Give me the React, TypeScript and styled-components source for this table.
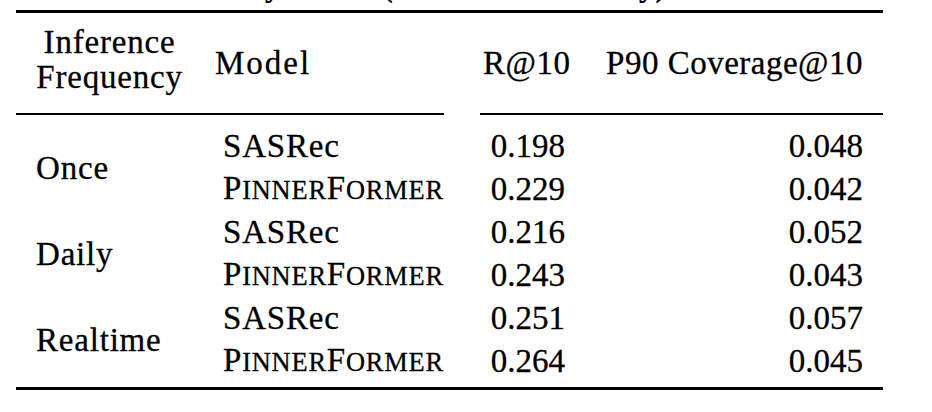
import React from 'react';
import styled, { createGlobalStyle } from 'styled-components';

type Model = 'sasrec' | 'pinnerformer';

type ResultRow = {
  model: Model;
  recall: string;
  coverage: string;
};

type Group = {
  frequency: string;
  rows: ResultRow[];
};

const groups: Group[] = [
  {
    frequency: 'Once',
    rows: [
      { model: 'sasrec', recall: '0.198', coverage: '0.048' },
      { model: 'pinnerformer', recall: '0.229', coverage: '0.042' },
    ],
  },
  {
    frequency: 'Daily',
    rows: [
      { model: 'sasrec', recall: '0.216', coverage: '0.052' },
      { model: 'pinnerformer', recall: '0.243', coverage: '0.043' },
    ],
  },
  {
    frequency: 'Realtime',
    rows: [
      { model: 'sasrec', recall: '0.251', coverage: '0.057' },
      { model: 'pinnerformer', recall: '0.264', coverage: '0.045' },
    ],
  },
];

const Ink = '#000';
const FIRST_BODY_ROW = 4;

const GlobalStyle = createGlobalStyle`
  html, body {
    margin: 0;
    padding: 0;
    background: #fff;
  }
  body {
    font-family: "Liberation Serif", "Times New Roman", serif;
    color: ${Ink};
  }
`;

const Page = styled.div`
  width: 932px;
  height: 412px;
  overflow: hidden;
  background: #fff;
`;

// only the descenders of the caption above the table are in view
const Caption = styled.div`
  margin-top: -31px;
  padding-left: 46px;
  height: 33px;
  font-size: 33px;
  line-height: 33px;
  font-weight: 700;
  white-space: nowrap;
`;

const Table = styled.div`
  display: grid;
  grid-template-columns: 147px 220px 82px 258px;
  grid-template-rows: 100px 2px 10px repeat(6, 43px);
  column-gap: 40px;
  box-sizing: border-box;
  width: 867px;
  margin: 8px 0 0 16px;
  padding: 0 20px 4px;
  border-top: 3px solid ${Ink};
  border-bottom: 3px solid ${Ink};
  font-size: 33px;
  -webkit-text-stroke: 0.3px ${Ink};
`;

const HeadCell = styled.div<{ $col: number; $align?: 'left' | 'right' | 'center' }>`
  grid-row: 1;
  grid-column: ${(p) => p.$col};
  align-self: center;
  text-align: ${(p) => p.$align ?? 'left'};
  line-height: 35px;
  letter-spacing: 0.5px;
  white-space: nowrap;
`;

const StackedHead = styled(HeadCell)`
  margin-bottom: 6px;
  letter-spacing: 0.8px;
`;

const ModelHead = styled(HeadCell)`
  margin-left: -8px;
  letter-spacing: 2px;
`;

const MidRule = styled.div<{ $from: number; $to: number; $left: number; $right: number }>`
  grid-row: 2;
  grid-column: ${(p) => p.$from} / ${(p) => p.$to};
  margin-left: ${(p) => p.$left}px;
  margin-right: ${(p) => p.$right}px;
  border-top: 2px solid ${Ink};
`;

const Cell = styled.div<{ $col: number; $row: number; $span?: number; $num?: boolean }>`
  grid-column: ${(p) => p.$col};
  grid-row: ${(p) => p.$row} / span ${(p) => p.$span ?? 1};
  align-self: center;
  text-align: ${(p) => (p.$num ? 'right' : 'left')};
  line-height: 43px;
  letter-spacing: ${(p) => (p.$num ? '0' : '0.8px')};
  white-space: nowrap;
`;

const SmallCaps = styled.span`
  font-size: 0.8em;
  text-transform: uppercase;
`;

const ModelName = ({ model }: { model: Model }) =>
  model === 'sasrec' ? (
    <>SASRec</>
  ) : (
    <>
      P<SmallCaps>inner</SmallCaps>F<SmallCaps>ormer</SmallCaps>
    </>
  );

export default function App() {
  return (
    <Page>
      <GlobalStyle />
      <Caption>Table 5: Latency Effect (Recall vs Diversity)</Caption>
      <Table>
        <StackedHead $col={1} $align="center">
          Inference
          <br />
          Frequency
        </StackedHead>
        <ModelHead $col={2}>Model</ModelHead>
        <HeadCell $col={3} $align="right">
          R@10
        </HeadCell>
        <HeadCell $col={4} $align="right">
          P90 Coverage@10
        </HeadCell>

        <MidRule $from={1} $to={3} $left={-20} $right={-1} />
        <MidRule $from={3} $to={5} $left={-3} $right={-20} />

        {groups.map((group, g) => {
          const groupRow = FIRST_BODY_ROW + g * 2;
          return (
            <React.Fragment key={group.frequency}>
              <Cell $col={1} $row={groupRow} $span={group.rows.length}>
                {group.frequency}
              </Cell>
              {group.rows.map((row, i) => (
                <React.Fragment key={row.model}>
                  <Cell $col={2} $row={groupRow + i}>
                    <ModelName model={row.model} />
                  </Cell>
                  <Cell $col={3} $row={groupRow + i} $num>
                    {row.recall}
                  </Cell>
                  <Cell $col={4} $row={groupRow + i} $num>
                    {row.coverage}
                  </Cell>
                </React.Fragment>
              ))}
            </React.Fragment>
          );
        })}
      </Table>
    </Page>
  );
}
